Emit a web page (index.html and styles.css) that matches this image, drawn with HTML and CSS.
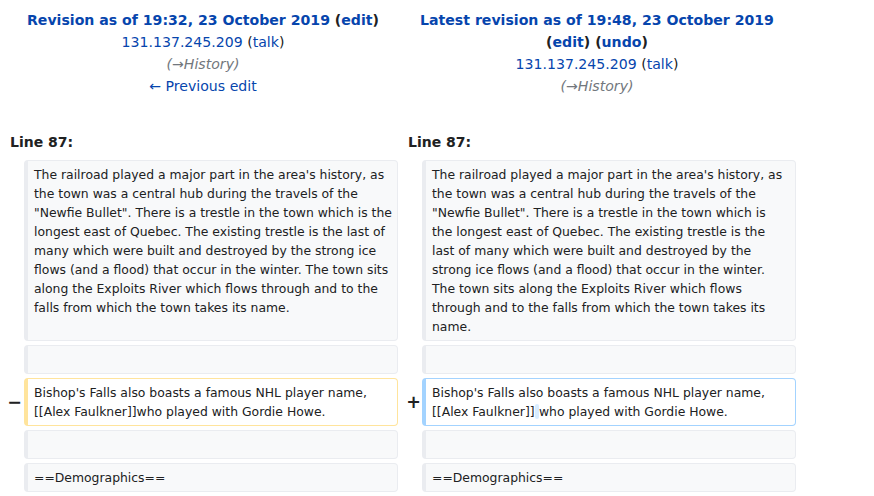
FILE: index.html
```html
<!DOCTYPE html>
<html lang="en">
<head>
<meta charset="utf-8">
<title>Difference between revisions</title>
<link rel="stylesheet" href="styles.css">
</head>
<body>
<div class="diff">
  <div class="title title-old">
    <div class="strong"><a href="#">Revision as of 19:32, 23 October 2019</a> (<a href="#">edit</a>)</div>
    <div><a href="#">131.137.245.209</a> (<a href="#">talk</a>)</div>
    <div class="comment">(<a href="#">→</a>History)</div>
    <div><a href="#">← Previous edit</a></div>
  </div>
  <div class="title title-new">
    <div class="strong"><a href="#">Latest revision as of 19:48, 23 October 2019</a><br>(<a href="#">edit</a>) (<a href="#">undo</a>)</div>
    <div><a href="#">131.137.245.209</a> (<a href="#">talk</a>)</div>
    <div class="comment">(<a href="#">→</a>History)</div>
  </div>

  <div class="lineno lineno-old">Line 87:</div>
  <div class="lineno lineno-new">Line 87:</div>

  <div class="marker"></div>
  <div class="line context">The railroad played a major part in the area's history, as<br>the town was a central hub during the travels of the<br>"Newfie Bullet". There is a trestle in the town which is the<br>longest east of Quebec. The existing trestle is the last of<br>many which were built and destroyed by the strong ice<br>flows (and a flood) that occur in the winter. The town sits<br>along the Exploits River which flows through and to the<br>falls from which the town takes its name.</div>
  <div class="marker"></div>
  <div class="line context">The railroad played a major part in the area's history, as<br>the town was a central hub during the travels of the<br>"Newfie Bullet". There is a trestle in the town which is<br>the longest east of Quebec. The existing trestle is the<br>last of many which were built and destroyed by the<br>strong ice flows (and a flood) that occur in the winter.<br>The town sits along the Exploits River which flows<br>through and to the falls from which the town takes its<br>name.</div>

  <div class="marker"></div>
  <div class="line context"><br></div>
  <div class="marker"></div>
  <div class="line context"><br></div>

  <div class="marker marker-del">−</div>
  <div class="line deleted">Bishop's Falls also boasts a famous NHL player name,<br>[[Alex Faulkner]]who played with Gordie Howe.</div>
  <div class="marker marker-add">+</div>
  <div class="line added">Bishop's Falls also boasts a famous NHL player name,<br>[[Alex Faulkner]]<span class="diffchange"> </span>who played with Gordie Howe.</div>

  <div class="marker"></div>
  <div class="line context"><br></div>
  <div class="marker"></div>
  <div class="line context"><br></div>

  <div class="marker"></div>
  <div class="line context">==Demographics==</div>
  <div class="marker"></div>
  <div class="line context">==Demographics==</div>
</div>
</body>
</html>
```

FILE: styles.css
```css
html, body {
  margin: 0;
  padding: 0;
  background: #ffffff;
}

body {
  padding: 8px 8px 0;
  font-family: "DejaVu Sans", sans-serif;
  font-size: 14px;
  color: #202122;
}

a {
  color: #0645ad;
  text-decoration: none;
}

.diff {
  display: grid;
  grid-template-columns: 16px 374px 24px 374px;
  row-gap: 4px;
  align-items: stretch;
}

.title {
  grid-column: span 2;
  text-align: center;
  line-height: 22px;
  padding-top: 1px;
  font-size: 14.1px;
}

.strong {
  font-weight: bold;
}

.comment,
.comment a {
  font-style: italic;
  color: #72777d;
}

.lineno {
  grid-column: span 2;
  font-weight: bold;
  line-height: 22px;
  padding-top: 30px;
  padding-bottom: 3px;
}

.lineno-old {
  padding-left: 2px;
}

.lineno-new {
  padding-left: 10px;
}

.marker {
  display: flex;
  align-items: center;
  justify-content: flex-end;
  font-weight: bold;
  font-size: 17.5px;
  line-height: 1.2;
  padding-right: 1px;
}

.marker-del {
  padding-right: 2px;
}

.line {
  font-size: 12.4px;
  line-height: 19px;
  padding: 4px 6px;
  white-space: nowrap;
  border-style: solid;
  border-width: 1px 1px 1px 4px;
  border-radius: 4px;
}

.context {
  background: #f8f9fa;
  border-color: #eaecf0;
}

.deleted {
  background: #ffffff;
  border-color: #ffe49c;
}

.added {
  background: #ffffff;
  border-color: #a3d3ff;
}

.diffchange {
  font-weight: bold;
  background: #d8ecff;
  border-radius: 4px;
}
```
